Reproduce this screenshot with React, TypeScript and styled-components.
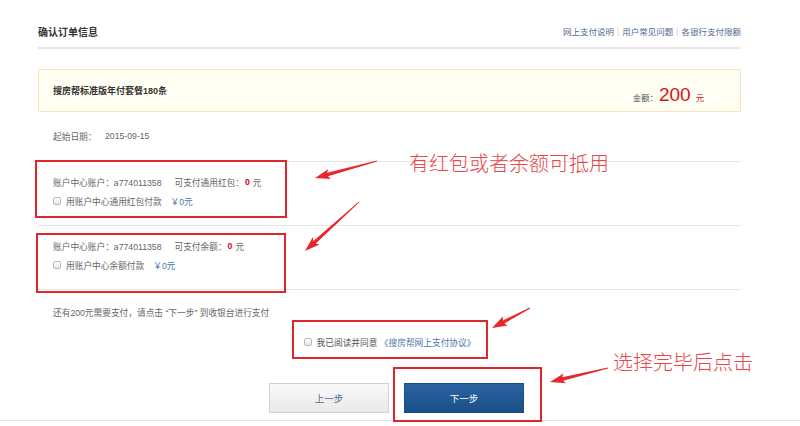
import styled, { createGlobalStyle } from "styled-components";

const GlobalStyle = createGlobalStyle`
  html, body { margin: 0; padding: 0; background: #fff; }
  body { font-family: "Liberation Sans", "Noto Sans CJK SC", sans-serif; }
`;

const SMALL = "8.7px";

const Page = styled.div`
  position: relative;
  width: 800px;
  height: 426px;
  overflow: hidden;
  background: #fff;
  color: #666;
  font-size: ${SMALL};
`;

const Main = styled.div`
  padding: 0 59px 0 38px;
  display: flex;
  flex-direction: column;
`;

const Header = styled.div`
  display: flex;
  justify-content: space-between;
  align-items: center;
  height: 18px;
  padding: 22px 0 7px;
  border-bottom: 2px solid #e8e8e8;
`;

const Title = styled.h2`
  margin: 0;
  font-size: 10px;
  font-weight: 700;
  color: #333;
`;

const Links = styled.div`
  display: flex;
  align-items: center;
  color: #52698c;
  font-size: 8.5px;
`;

const Sep = styled.span`
  color: #d4d4d4;
  margin: 0 3px;
`;

const OrderBox = styled.div`
  margin-top: 20px;
  height: 41px;
  display: flex;
  align-items: center;
  justify-content: space-between;
  padding: 0 36px 0 14px;
  background: #fffef2;
  border: 1px solid #f5e4be;
`;

const OrderName = styled.div`
  font-size: 9px;
  font-weight: 700;
  color: #333;
`;

const Amount = styled.div`
  display: flex;
  align-items: baseline;
  padding-top: 8px;
  color: #555;
  font-size: 8.4px;
`;

const Big = styled.span`
  font-size: 19px;
  color: #d4141b;
  margin: 0 5px 0 1px;
  line-height: 1;
`;

const Unit = styled.span`
  color: #d4141b;
`;

const DateRow = styled.div`
  margin: 15px 0 16px;
  height: 18px;
  display: flex;
  align-items: center;
  padding-left: 15px;
`;

const Label = styled.span`
  width: 52px;
`;

const Section = styled.div`
  border-top: 1px solid #e6e6e6;
  padding: 13px 0 17px 15px;
  display: flex;
  flex-direction: column;
  gap: 5px;
`;

const Row = styled.div<{ $center?: boolean }>`
  display: flex;
  align-items: center;
  height: 14px;
  white-space: pre;
  justify-content: ${(p) => (p.$center ? "center" : "flex-start")};
`;

const Gap = styled.span<{ $w: number }>`
  display: inline-block;
  width: ${(p) => p.$w}px;
`;

const Zero = styled.b`
  color: #d0021b;
  margin: 0 3px 0 1px;
`;

const Box = styled.input.attrs({ type: "checkbox" })`
  appearance: none;
  margin: 0 5px 0 0;
  width: 8px;
  height: 8px;
  border: 1px solid #b9b9b9;
  border-radius: 2px;
  background: linear-gradient(#fff, #e6e6e6);
  box-sizing: border-box;
`;

const Blue = styled.span`
  color: #4a76ad;
`;

const Notice = styled.div`
  border-top: 1px solid #e6e6e6;
  padding: 15px 0 0 15px;
  height: 14px;
  display: flex;
  align-items: center;
  white-space: pre;
`;

const Agree = styled(Row)`
  margin-top: 16px;
  color: #555;
`;

const Buttons = styled.div`
  margin: 34px 0 7px;
  display: flex;
  justify-content: center;
  gap: 15px;
  padding-left: 14px;
`;

const Btn = styled.button<{ $primary?: boolean }>`
  width: 120px;
  height: 30px;
  border: 1px solid ${(p) => (p.$primary ? "#1a4d84" : "#d2d2d2")};
  background: ${(p) =>
    p.$primary
      ? "linear-gradient(#2a64a2, #1b4f88)"
      : "linear-gradient(#f9f9f9, #e9e9e9)"};
  color: ${(p) => (p.$primary ? "#fff" : "#4a6a95")};
  font-family: "Liberation Sans", "Noto Sans CJK SC", sans-serif;
  font-size: 9.5px;
  padding: 0;
`;

const FootLine = styled.div`
  border-top: 1px solid #e2e2e2;
`;

// 标注层：红框、箭头、说明文字
const Mark = styled.div<{ $x: number; $y: number; $w: number; $h: number }>`
  position: absolute;
  left: ${(p) => p.$x}px;
  top: ${(p) => p.$y}px;
  width: ${(p) => p.$w}px;
  height: ${(p) => p.$h}px;
  border: 2px solid #e0262c;
  box-sizing: border-box;
  pointer-events: none;
`;

const Note = styled.div<{ $x: number; $y: number }>`
  position: absolute;
  left: ${(p) => p.$x}px;
  top: ${(p) => p.$y}px;
  font-family: "Noto Sans CJK SC", sans-serif;
  font-weight: 300;
  font-size: 20px;
  line-height: 20px;
  color: #e8464b;
  white-space: nowrap;
`;

const Overlay = styled.svg`
  position: absolute;
  left: 0;
  top: 0;
  pointer-events: none;
`;

const arrow = (x1: number, y1: number, x2: number, y2: number) => {
  const dx = x2 - x1;
  const dy = y2 - y1;
  const len = Math.hypot(dx, dy);
  const ux = dx / len;
  const uy = dy / len;
  const nx = -uy;
  const ny = ux;
  const hl = 13;
  const hw = 5;
  const nw = 1.8;
  const bx = x2 - ux * hl;
  const by = y2 - uy * hl;
  const wx = bx - ux * 2;
  const wy = by - uy * 2;
  const pts = [
    [x1 + nx * 0.4, y1 + ny * 0.4],
    [bx + nx * nw, by + ny * nw],
    [wx + nx * hw, wy + ny * hw],
    [x2, y2],
    [wx - nx * hw, wy - ny * hw],
    [bx - nx * nw, by - ny * nw],
    [x1 - nx * 0.4, y1 - ny * 0.4],
  ];
  return pts.map((p) => p.map((v) => v.toFixed(1)).join(",")).join(" ");
};

const arrows = [
  [377, 161, 315, 178],
  [359, 202, 305, 251],
  [530, 308, 492, 328],
  [608, 368, 550, 382],
];

const App = () => (
  <>
    <GlobalStyle />
    <Page>
      <Main>
        <Header>
          <Title>确认订单信息</Title>
          <Links>
            <span>网上支付说明</span>
            <Sep>|</Sep>
            <span>用户常见问题</span>
            <Sep>|</Sep>
            <span>各银行支付限额</span>
          </Links>
        </Header>

        <OrderBox>
          <OrderName>搜房帮标准版年付套餐180条</OrderName>
          <Amount>
            金额：<Big>200</Big>
            <Unit>元</Unit>
          </Amount>
        </OrderBox>

        <DateRow>
          <Label>起始日期：</Label>
          2015-09-15
        </DateRow>

        <Section>
          <Row>
            账户中心账户：a774011358
            <Gap $w={13} />
            可支付通用红包：<Zero>0</Zero>元
          </Row>
          <Row>
            <Box />
            用账户中心通用红包付款
            <Gap $w={9} />
            <Blue>￥0元</Blue>
          </Row>
        </Section>

        <Section>
          <Row>
            账户中心账户：a774011358
            <Gap $w={13} />
            可支付余额：<Zero>0</Zero>元
          </Row>
          <Row>
            <Box />
            用账户中心余额付款
            <Gap $w={9} />
            <Blue>￥0元</Blue>
          </Row>
        </Section>

        <Notice>还有200元需要支付，请点击 “下一步” 到收银台进行支付</Notice>

        <Agree $center>
          <Box />
          我已阅读并同意 <Blue>《搜房帮网上支付协议》</Blue>
        </Agree>

        <Buttons>
          <Btn>上一步</Btn>
          <Btn $primary>下一步</Btn>
        </Buttons>
      </Main>
      <FootLine />

      <Mark $x={35} $y={160} $w={252} $h={58} />
      <Mark $x={36} $y={233} $w={250} $h={60} />
      <Mark $x={292} $y={320} $w={196} $h={39} />
      <Mark $x={393} $y={367} $w={149} $h={55} />

      <Overlay width={800} height={426} viewBox="0 0 800 426">
        {arrows.map(([a, b, c, d], i) => (
          <polygon key={i} points={arrow(a, b, c, d)} fill="#e8262b" />
        ))}
      </Overlay>

      <Note $x={409} $y={153}>有红包或者余额可抵用</Note>
      <Note $x={613} $y={352}>选择完毕后点击</Note>
    </Page>
  </>
);

export default App;
